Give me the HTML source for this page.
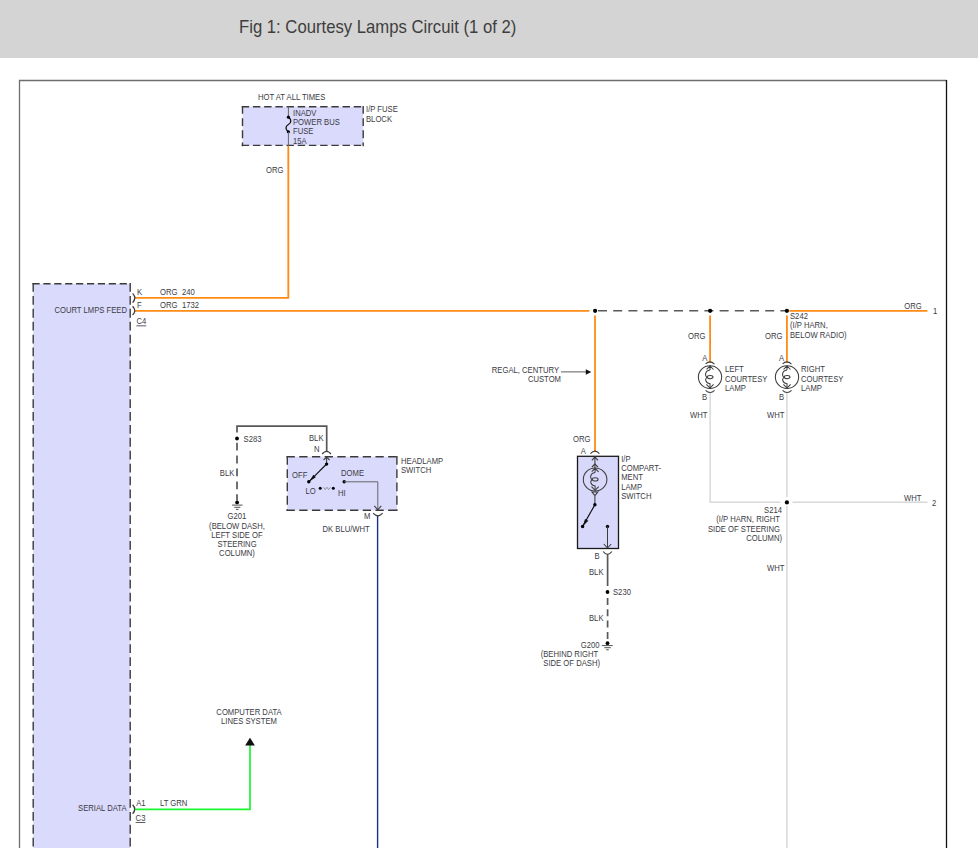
<!DOCTYPE html>
<html>
<head>
<meta charset="utf-8">
<title>Fig 1: Courtesy Lamps Circuit (1 of 2)</title>
<style>
html,body{margin:0;padding:0;background:#fff;}
body{width:978px;height:865px;overflow:hidden;position:relative;font-family:"Liberation Sans",sans-serif;}
#hdr{position:absolute;left:0;top:0;width:978px;height:57.5px;background:#d4d4d4;}
#hdr span{position:absolute;left:239px;top:15.6px;font-size:16.7px;line-height:20px;color:#3e3e3e;white-space:nowrap;transform:scaleY(1.1);transform-origin:0 0;}
svg{position:absolute;left:0;top:0;}
svg text{font-family:"Liberation Sans",sans-serif;font-size:8.3px;fill:#3c3c44;}
.o{stroke:#ff8a14;stroke-width:1.8;fill:none;}
.k{stroke:#585858;stroke-width:1.7;fill:none;}
.kd{stroke:#555;stroke-width:1.5;fill:none;stroke-dasharray:7.4 3.8;}
.t{stroke:#3c3c3c;stroke-width:1.05;fill:none;}
.t2{stroke:#666;stroke-width:1;fill:none;}
.w{stroke:#d8d8d8;stroke-width:1.45;fill:none;}
.g{stroke:#1af530;stroke-width:1.7;fill:none;}
.b{stroke:#1a2f8c;stroke-width:1.4;fill:none;}
.bf{fill:#dadafc;stroke:none;}
.bd{stroke:#3a3a3a;stroke-width:1.4;fill:none;}
.sbox{fill:#d8d8fb;stroke:#1a1a1a;stroke-width:1.3;}
.d{fill:#000;stroke:none;}
</style>
</head>
<body>
<div id="hdr"><span>Fig 1: Courtesy Lamps Circuit (1 of 2)</span></div>
<svg width="978" height="865" viewBox="0 0 978 865">
<!-- FRAME -->
<g id="frame">
<path d="M19.5 848 V80.5 H946.5" stroke="#6e6e6e" stroke-width="1.3" fill="none"/>
<path d="M946.5 80 V848" stroke="#111" stroke-width="1.3" fill="none"/>
</g>
<!-- MODULE -->
<g id="module">
<rect class="bf" x="33.2" y="283.8" width="96.99999999999999" height="586.2"/>
<path class="bd" stroke-dasharray="7.2 3.7" d="M32.45 283.8 H130.95"/>
<path class="bd" stroke-dasharray="7.2 3.7" d="M32.45 870 H130.95"/>
<path class="bd" stroke-dasharray="8.8 4.1" d="M33.2 283.05 V870.75"/>
<path class="bd" stroke-dasharray="8.8 4.1" d="M130.2 283.05 V870.75"/>
</g>
<!-- FUSE -->
<g id="fuse">
<rect class="bf" x="242.5" y="106.7" width="120.69999999999999" height="38.7"/>
<path class="bd" stroke-dasharray="7.4 3.8" d="M241.75 106.7 H363.95"/>
<path class="bd" stroke-dasharray="7.4 3.8" d="M241.75 145.4 H363.95"/>
<path class="bd" stroke-dasharray="7.9 4.3" d="M242.5 105.95 V146.15"/>
<path class="bd" stroke-dasharray="7.9 4.3" d="M363.2 105.95 V146.15"/>
<path class="t2" d="M288.4 106.7 V117"/>
<path d="M288.4 117.2 C291.6 119 291.6 123 288.4 124.5 C285.2 126 285.2 130 288.4 131.8" stroke="#111" stroke-width="1.3" fill="none"/>
<circle class="d" cx="288.4" cy="117.2" r="1.6"/>
<circle class="d" cx="288.4" cy="131.8" r="1.6"/>
<path class="t2" d="M288.4 132 V146"/>
</g>
<!-- WIRES -->
<g id="wires">
<path class="o" d="M288.3 146 V297.8 H135"/>
<path class="o" d="M135 310.8 H589.3"/>
<path class="k" stroke-dasharray="9 6.2" d="M598 310.8 H787" style="stroke:#5a5a5a;stroke-width:1.4"/>
<path class="o" d="M789.3 310.8 H927.4"/>
<path class="o" d="M595 315.6 V452"/>
<path class="o" d="M710.1 315.6 V363"/>
<path class="o" d="M786.9 315.6 V363"/>
<path class="w" d="M710.1 392.5 V502.3 H780.5"/>
<path class="w" d="M786.9 392.5 V497 M786.9 506 V848"/>
<path class="w" d="M792.5 502.3 H927.4"/>
<path class="t" d="M132.6 293.4 Q137 298 132.6 302.6" style="stroke-width:1.3"/>
<path class="t" d="M132.6 306.3 Q137 310.8 132.6 315" style="stroke-width:1.3"/>
<path class="t" d="M132.6 804.8 Q137 809.3 132.6 813.8" style="stroke-width:1.3"/>
<path class="g" d="M135 809.3 H250 V745"/>
<path d="M250 737.8 L254.9 745.6 H245.1 Z" fill="#111"/>
<path class="b" d="M377.6 515.4 V848"/>
<circle class="d" cx="595.1" cy="310.8" r="2.1"/>
<circle class="d" cx="710.1" cy="310.8" r="2.1"/>
<circle class="d" cx="786.9" cy="310.8" r="2.1"/>
<circle class="d" cx="786.9" cy="502.4" r="2.1"/>
<path class="t2" d="M561 371.9 H586.5" style="stroke:#333;stroke-width:0.8"/>
<path d="M591.3 372 L585.8 369.3 V374.7 Z" fill="#111"/>
</g>
<!-- HEADLAMP -->
<g id="headlamp">
<rect class="bf" x="287.3" y="456.7" width="109.59999999999997" height="53.60000000000002"/>
<path class="bd" stroke-dasharray="8.3 4.4" d="M286.55 456.7 H397.65"/>
<path class="bd" stroke-dasharray="8.3 4.4" d="M286.55 510.3 H397.65"/>
<path class="bd" stroke-dasharray="8.8 4.5" d="M287.3 455.95 V511.05"/>
<path class="bd" stroke-dasharray="8.8 4.5" d="M396.9 455.95 V511.05"/>
<path class="k" d="M237 432.5 V426.2 H326.7 V451.5"/>
<path class="k" stroke-dasharray="7.8 5.1" d="M237 442.7 V500.5"/>
<circle class="d" cx="237" cy="438.5" r="1.9"/>
<circle class="d" cx="237.1" cy="502.4" r="1.9"/>
<path class="t" d="M232.1 505.1 H242.5 M234.3 507.3 H240.3 M236 509.4 H238.5" style="stroke-width:0.9"/>
<path class="t" d="M322.1 454 Q326.6 448.8 331 454" style="stroke-width:1.2"/>
<path class="t" d="M323.6 460 L326.6 457.2 L329.6 460 M326.6 457.2 V464"/>
<path d="M326.6 464 L308.8 481.8" stroke="#111" stroke-width="1.1" fill="none"/>
<path d="M309.4 481.2 L313.4 474.8 L315.9 477.3 Z" fill="#111"/>
<circle class="d" cx="326.6" cy="464.1" r="1.7"/>
<circle class="d" cx="308.8" cy="481.8" r="1.7"/>
<circle class="d" cx="320.2" cy="488.3" r="1.5"/>
<circle class="d" cx="333.3" cy="488.3" r="1.5"/>
<path d="M323.5 487.2 l1.7 2.4 l1.7 -2.4 l1.7 2.4 l1.7 -2.4" stroke-width="0.7" stroke="#777" fill="none"/>
<circle class="d" cx="344.2" cy="481.8" r="1.7"/>
<path class="t2" d="M344.2 481.8 H377.8 V509.8"/>
<path class="t" d="M374.3 505.9 L377.8 509.8 L381.3 505.9"/>
<path class="t" d="M373.1 513.2 Q377.8 518.4 382.7 513.2" style="stroke-width:1.2"/>
</g>
<!-- COMPARTMENT -->
<g id="compart">
<rect class="sbox" x="577.5" y="456.3" width="41" height="92.2"/>
<path class="t" d="M590.5 453.6 Q594.9 448.6 599.4 453.6" style="stroke-width:1.2"/>
<path class="t" d="M591.9 460.3 L594.9 456.8 L597.9 460.3 M594.9 456.8 V468"/>
<path class="t" d="M591.9 467 L594.9 464.1 L597.9 467"/>
<g transform="translate(595.1 479.4)">
<ellipse class="t" cx="0" cy="0" rx="11.8" ry="11.5"/>
<path class="t" d="M-3.4 -7.7 L0 -11.1 L3.5 -7.6 M0 -11.3 V-7"/>
<path class="t" d="M0 -7 C-5.6 -6.2 -5.2 -0.2 -2.7 0.2 M-2.8 0.4 C-5.2 1 -5 6 0 6.6 V11.2"/>
<ellipse class="t" cx="0.1" cy="0" rx="2.9" ry="1.6"/>
<path class="t" d="M-3.6 7.3 L0 10.9 L3.6 7.3"/>
</g>
<path class="t" d="M591.9 491.9 L594.9 495.6 L597.9 491.9 Z M594.9 495.6 V504"/>
<path d="M594.9 504.7 L582.6 526.5" stroke="#111" stroke-width="1.2" fill="none"/>
<path d="M583 525.9 L585 518.9 L588.3 520.8 Z" fill="#111"/>
<circle class="d" cx="594.9" cy="504.7" r="1.7"/>
<circle class="d" cx="582.6" cy="526.5" r="1.7"/>
<circle class="d" cx="607.5" cy="526.5" r="1.7"/>
<path class="t" d="M607.5 526.5 V548"/>
<path class="t" d="M603.8 544 L607.5 548 L611.2 544"/>
<path class="t" d="M603.2 551.5 Q607.5 557.3 611.9 551.5" style="stroke-width:1.2"/>
<path class="k" d="M607.6 554.6 V586"/>
<path class="k" stroke-dasharray="7 4.3" d="M607.6 598 V641.5"/>
<circle class="d" cx="607.5" cy="592" r="1.9"/>
<circle class="d" cx="607.5" cy="643.2" r="1.9"/>
<path class="t" d="M601.8 645.6 H612.7 M604.3 647.7 H610.7 M606.2 649.8 H608.8" style="stroke-width:0.9"/>
</g>
<!-- LAMPS -->
<g id="lamps">
<g transform="translate(710.0 377.1)">
<path class="t" d="M-4.4 -13.3 Q0 -17.3 4.5 -13"/>
<ellipse class="t" cx="0" cy="0" rx="11.65" ry="11.35"/>
<path class="t" d="M-3.4 -7.7 L0 -11.1 L3.5 -7.6 M0 -11.3 V-7"/>
<path class="t" d="M0 -7 C-5.6 -6.2 -5.2 -0.2 -2.7 0.2 M-2.8 0.4 C-5.2 1 -5 6 0 6.6 V11.2"/>
<ellipse class="t" cx="0.1" cy="0" rx="2.9" ry="1.6"/>
<path class="t" d="M-3.6 7.3 L0 10.9 L3.6 7.3"/>
<path class="t" d="M-4.4 13.3 Q0 17.5 4.6 13.3"/>
</g>
<g transform="translate(787.0 377.1)">
<path class="t" d="M-4.4 -13.3 Q0 -17.3 4.5 -13"/>
<ellipse class="t" cx="0" cy="0" rx="11.65" ry="11.35"/>
<path class="t" d="M-3.4 -7.7 L0 -11.1 L3.5 -7.6 M0 -11.3 V-7"/>
<path class="t" d="M0 -7 C-5.6 -6.2 -5.2 -0.2 -2.7 0.2 M-2.8 0.4 C-5.2 1 -5 6 0 6.6 V11.2"/>
<ellipse class="t" cx="0.1" cy="0" rx="2.9" ry="1.6"/>
<path class="t" d="M-3.6 7.3 L0 10.9 L3.6 7.3"/>
<path class="t" d="M-4.4 13.3 Q0 17.5 4.6 13.3"/>
</g>
</g>
<!-- TEXT -->
<g id="labels">
<text transform="matrix(0.925 0 0 1 258 100)">HOT AT ALL TIMES</text>
<text transform="matrix(0.925 0 0 1 293 116)">INADV</text>
<text transform="matrix(0.925 0 0 1 293 124.9)">POWER BUS</text>
<text transform="matrix(0.925 0 0 1 293 134)">FUSE</text>
<text transform="matrix(0.925 0 0 1 293 144.3)">15A</text>
<text transform="matrix(0.925 0 0 1 366 112)">I/P FUSE</text>
<text transform="matrix(0.925 0 0 1 366 121.5)">BLOCK</text>
<text transform="matrix(0.925 0 0 1 266 173)">ORG</text>
<text transform="matrix(0.925 0 0 1 127 312.5)" text-anchor="end">COURT LMPS FEED</text>
<text transform="matrix(0.925 0 0 1 137 294.6)">K</text>
<text transform="matrix(0.925 0 0 1 160 294.6)">ORG</text>
<text transform="matrix(0.925 0 0 1 182 294.6)">240</text>
<text transform="matrix(0.925 0 0 1 137 307.5)">F</text>
<text transform="matrix(0.925 0 0 1 160 307.5)">ORG</text>
<text transform="matrix(0.925 0 0 1 182 307.5)">1732</text>
<text transform="matrix(0.925 0 0 1 136.4 324.4)" text-decoration="underline">C4</text>
<text transform="matrix(0.925 0 0 1 126.5 811)" text-anchor="end">SERIAL DATA</text>
<text transform="matrix(0.925 0 0 1 136.2 806)">A1</text>
<text transform="matrix(0.925 0 0 1 160 806)">LT GRN</text>
<text transform="matrix(0.925 0 0 1 135.6 821)" text-decoration="underline">C3</text>
<text transform="matrix(0.925 0 0 1 249 715)" text-anchor="middle">COMPUTER DATA</text>
<text transform="matrix(0.925 0 0 1 249 724.3)" text-anchor="middle">LINES SYSTEM</text>
<text transform="matrix(0.925 0 0 1 904.3 308.8)">ORG</text>
<text transform="matrix(0.925 0 0 1 933 313.5)">1</text>
<text transform="matrix(0.925 0 0 1 904 500.5)">WHT</text>
<text transform="matrix(0.925 0 0 1 932 506.3)">2</text>
<text transform="matrix(0.925 0 0 1 790 319)">S242</text>
<text transform="matrix(0.925 0 0 1 790 328.3)">(I/P HARN,</text>
<text transform="matrix(0.925 0 0 1 790 337.7)">BELOW RADIO)</text>
<text transform="matrix(0.925 0 0 1 688 339.3)">ORG</text>
<text transform="matrix(0.925 0 0 1 765 339.3)">ORG</text>
<text transform="matrix(0.925 0 0 1 702.2 361)">A</text>
<text transform="matrix(0.925 0 0 1 778.9 361)">A</text>
<text transform="matrix(0.925 0 0 1 702 400.3)">B</text>
<text transform="matrix(0.925 0 0 1 779 400.3)">B</text>
<text transform="matrix(0.925 0 0 1 690 418)">WHT</text>
<text transform="matrix(0.925 0 0 1 767 418)">WHT</text>
<text transform="matrix(0.925 0 0 1 725 372)">LEFT</text>
<text transform="matrix(0.925 0 0 1 725 381.7)">COURTESY</text>
<text transform="matrix(0.925 0 0 1 725 391)">LAMP</text>
<text transform="matrix(0.925 0 0 1 801 372)">RIGHT</text>
<text transform="matrix(0.925 0 0 1 801 381.7)">COURTESY</text>
<text transform="matrix(0.925 0 0 1 801 391)">LAMP</text>
<text transform="matrix(0.925 0 0 1 782 513)" text-anchor="end">S214</text>
<text transform="matrix(0.925 0 0 1 780 522.3)" text-anchor="end">(I/P HARN, RIGHT</text>
<text transform="matrix(0.925 0 0 1 780 532)" text-anchor="end">SIDE OF STEERING</text>
<text transform="matrix(0.925 0 0 1 782 541.3)" text-anchor="end">COLUMN)</text>
<text transform="matrix(0.925 0 0 1 767 571)">WHT</text>
<text transform="matrix(0.925 0 0 1 559 373)" text-anchor="end">REGAL, CENTURY</text>
<text transform="matrix(0.925 0 0 1 561 381.6)" text-anchor="end">CUSTOM</text>
<text transform="matrix(0.925 0 0 1 243.6 442)">S283</text>
<text transform="matrix(0.925 0 0 1 219.8 476)">BLK</text>
<text transform="matrix(0.925 0 0 1 309 441)">BLK</text>
<text transform="matrix(0.925 0 0 1 314 452)">N</text>
<text transform="matrix(0.925 0 0 1 237 518.8)" text-anchor="middle">G201</text>
<text transform="matrix(0.925 0 0 1 237 529)" text-anchor="middle">(BELOW DASH,</text>
<text transform="matrix(0.925 0 0 1 237 538.3)" text-anchor="middle">LEFT SIDE OF</text>
<text transform="matrix(0.925 0 0 1 237 546.8)" text-anchor="middle">STEERING</text>
<text transform="matrix(0.925 0 0 1 237 556)" text-anchor="middle">COLUMN)</text>
<text transform="matrix(0.925 0 0 1 401 464)">HEADLAMP</text>
<text transform="matrix(0.925 0 0 1 401 473.3)">SWITCH</text>
<text transform="matrix(0.925 0 0 1 292 477.7)">OFF</text>
<text transform="matrix(0.925 0 0 1 341 476)">DOME</text>
<text transform="matrix(0.925 0 0 1 305.4 494)">LO</text>
<text transform="matrix(0.925 0 0 1 338 496)">HI</text>
<text transform="matrix(0.925 0 0 1 364 519.3)">M</text>
<text transform="matrix(0.925 0 0 1 322.5 531.9)">DK BLU/WHT</text>
<text transform="matrix(0.925 0 0 1 573 442)">ORG</text>
<text transform="matrix(0.925 0 0 1 580.8 453.8)">A</text>
<text transform="matrix(0.925 0 0 1 594.6 558.8)">B</text>
<text transform="matrix(0.925 0 0 1 621.2 461.8)">I/P</text>
<text transform="matrix(0.925 0 0 1 621.2 471.1)">COMPART-</text>
<text transform="matrix(0.925 0 0 1 621.2 480)">MENT</text>
<text transform="matrix(0.925 0 0 1 621.2 489.6)">LAMP</text>
<text transform="matrix(0.925 0 0 1 621.2 499)">SWITCH</text>
<text transform="matrix(0.925 0 0 1 589 575)">BLK</text>
<text transform="matrix(0.925 0 0 1 589 621.1)">BLK</text>
<text transform="matrix(0.925 0 0 1 613 595)">S230</text>
<text transform="matrix(0.925 0 0 1 599.5 648.3)" text-anchor="end">G200</text>
<text transform="matrix(0.925 0 0 1 598.2 656.6)" text-anchor="end">(BEHIND RIGHT</text>
<text transform="matrix(0.925 0 0 1 600 666.1)" text-anchor="end">SIDE OF DASH)</text>
</g>
<rect x="0" y="848" width="978" height="20" fill="#fff"/>
</svg>
</body>
</html>
